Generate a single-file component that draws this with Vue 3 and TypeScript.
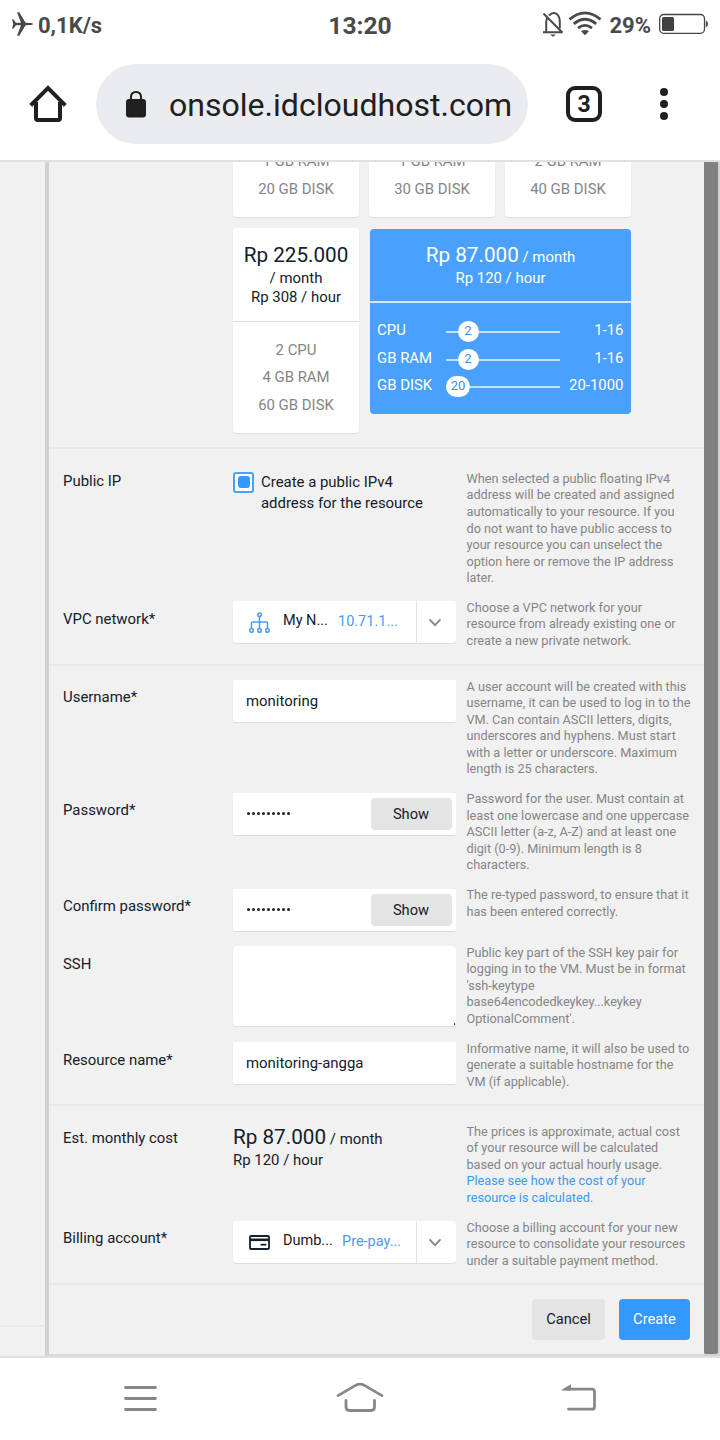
<script setup lang="ts">
interface Plan {
  ram: string
  disk: string
}
interface Slider {
  name: string
  value: number
  range: string
  offset: number
  wide?: boolean
}

const plans: Plan[] = [
  { ram: '1 GB RAM', disk: '20 GB DISK' },
  { ram: '1 GB RAM', disk: '30 GB DISK' },
  { ram: '2 GB RAM', disk: '40 GB DISK' },
]

const sliders: Slider[] = [
  { name: 'CPU', value: 2, range: '1-16', offset: 11.5 },
  { name: 'GB RAM', value: 2, range: '1-16', offset: 11.5 },
  { name: 'GB DISK', value: 20, range: '20-1000', offset: 0, wide: true },
]

const help = {
  ip: `When selected a public floating IPv4
address will be created and assigned
automatically to your resource. If you
do not want to have public access to
your resource you can unselect the
option here or remove the IP address
later.`,
  vpc: `Choose a VPC network for your
resource from already existing one or
create a new private network.`,
  user: `A user account will be created with this
username, it can be used to log in to the
VM. Can contain ASCII letters, digits,
underscores and hyphens. Must start
with a letter or underscore. Maximum
length is 25 characters.`,
  password: `Password for the user. Must contain at
least one lowercase and one uppercase
ASCII letter (a-z, A-Z) and at least one
digit (0-9). Minimum length is 8
characters.`,
  confirm: `The re-typed password, to ensure that it
has been entered correctly.`,
  ssh: `Public key part of the SSH key pair for
logging in to the VM. Must be in format
'ssh-keytype
base64encodedkeykey...keykey
OptionalComment'.`,
  name: `Informative name, it will also be used to
generate a suitable hostname for the
VM (if applicable).`,
  cost: `The prices is approximate, actual cost
of your resource will be calculated
based on your actual hourly usage.`,
  costLink: `Please see how the cost of your
resource is calculated.`,
  billing: `Choose a billing account for your new
resource to consolidate your resources
under a suitable payment method.`,
}
</script>

<template>
  <div class="phone">
    <header class="status">
      <div class="status-left">
        <svg class="plane" width="22" height="24" viewBox="0 0 22 24">
          <path d="M1 7.2 2.6 7.4 5 10.8 10 10.8 6 .2 8.2 .2 14.6 10.8 19.6 10.9Q22 11 22 12 22 13 19.6 13.1L14.6 13.2 8.2 23.8 6 23.8 10 13.2 5 13.2 2.6 16.6 1 16.8 2.2 12Z" fill="#4a4a4a" />
        </svg>
        <span>0,1K/s</span>
      </div>
      <span class="clock">13:20</span>
      <div class="status-right">
        <svg width="22" height="26" viewBox="0 0 22 26" fill="none" stroke="#4a4a4a" stroke-width="2">
          <path d="M1 21.2H20M4.2 21V11Q4.2 8.5 5.5 7M7 4.5Q11 .2 15 3.2Q17.8 5.5 17.8 11V17.5" />
          <path d="M1.5 2.5 20.5 21.8" />
          <path d="M8 23.4H14L11 25.8Z" fill="#4a4a4a" stroke="none" />
        </svg>
        <svg class="wifi" width="34" height="25" viewBox="0 0 34 25" fill="none" stroke="#4a4a4a" stroke-width="2.8">
          <path d="M1.5 8.4Q17-4.6 32.5 8.4" />
          <path d="M5.8 12.9Q17 3.7 28.2 12.9" />
          <path d="M10 17.2Q17 11.6 24 17.2" />
          <path d="M13 20.3Q17 17.5 21 20.3L17 24.2Z" fill="#4a4a4a" stroke="none" />
        </svg>
        <span class="percent">29%</span>
        <svg class="battery" width="50" height="22" viewBox="0 0 50 22">
          <rect x=".7" y="1.5" width="44.8" height="18.8" rx="4" fill="none" stroke="#464646" stroke-width="1.3" />
          <rect x="3" y="4" width="12" height="14" rx="1.5" fill="#41423d" />
          <path d="M46.8 7.5Q49 8 49 11 49 14 46.8 14.5Z" fill="#464646" />
        </svg>
      </div>
    </header>

    <nav class="toolbar">
      <svg class="home" width="38" height="38" viewBox="0 0 38 38" fill="none" stroke="#202020" stroke-width="4" stroke-linejoin="round">
        <path d="M7 17V33.2Q7 35 9 35H29Q31 35 31 33.2V17" />
        <path d="M1.7 20.3 19 3 36.3 20.3" stroke-linejoin="miter" />
      </svg>
      <div class="address">
        <svg width="20" height="27" viewBox="0 0 20 27">
          <rect y="8" width="20" height="18.5" rx="3" fill="#202020" />
          <path d="M5 10V6Q5 1 10 1T15 6V10" fill="none" stroke="#202020" stroke-width="2" />
        </svg>
        <span>onsole.idcloudhost.com</span>
      </div>
      <div class="tabs">3</div>
      <div class="dots"><i></i><i></i><i></i></div>
    </nav>

    <main class="viewport">
      <aside class="backdrop"></aside>
      <div class="panel">
        <section class="plans">
          <div class="plan-row">
            <div v-for="p in plans" :key="p.disk" class="card small">
              <span>{{ p.ram }}</span><span>{{ p.disk }}</span>
            </div>
          </div>
          <div class="plan-row second">
            <div class="card large">
              <div class="price">
                <b>Rp 225.000</b>
                <span>/ month</span>
                <span>Rp 308 / hour</span>
              </div>
              <div class="specs"><span>2 CPU</span><span>4 GB RAM</span><span>60 GB DISK</span></div>
            </div>
            <div class="custom">
              <div class="custom-price">
                <div><b>Rp 87.000</b> / month</div>
                <div>Rp 120 / hour</div>
              </div>
              <div class="sliders">
                <div v-for="s in sliders" :key="s.name" class="slider">
                  <span class="slider-name">{{ s.name }}</span>
                  <span class="track">
                    <span class="knob" :class="{ wide: s.wide }" :style="{ marginLeft: s.offset + 'px' }">{{ s.value }}</span>
                  </span>
                  <span class="range">{{ s.range }}</span>
                </div>
              </div>
            </div>
          </div>
        </section>

        <section class="group network">
          <div class="row">
            <label>Public IP</label>
            <div class="check">
              <span class="box"><i></i></span>
              <span>Create a public IPv4<br />address for the resource</span>
            </div>
            <p>{{ help.ip }}</p>
          </div>
          <div class="row">
            <label>VPC network*</label>
            <div class="select">
              <svg class="tree" width="21" height="21" viewBox="0 0 21 21" fill="none" stroke="#4a9cf0" stroke-width="1.5">
                <circle cx="10.5" cy="2.7" r="1.8" />
                <path d="M10.5 4.5V16.5M2.5 16.5V10.8Q2.5 10 3.3 10H17.7Q18.5 10 18.5 10.8V16.5" />
                <circle cx="2.5" cy="18.4" r="1.8" /><circle cx="10.5" cy="18.4" r="1.8" /><circle cx="18.5" cy="18.4" r="1.8" />
              </svg>
              <span class="main">My N...</span><span class="sub">10.71.1...</span>
              <span class="arrow"><svg width="14" height="9" viewBox="0 0 14 9" fill="none" stroke="#858585" stroke-width="1.8"><path d="M1.5 1.3 7 7.2 12.5 1.3" /></svg></span>
            </div>
            <p>{{ help.vpc }}</p>
          </div>
        </section>

        <section class="group access">
          <div class="row">
            <label>Username*</label>
            <div class="input">monitoring</div>
            <p>{{ help.user }}</p>
          </div>
          <div class="row">
            <label>Password*</label>
            <div class="input"><span class="secret"><i v-for="n in 9" :key="n"></i></span><button>Show</button></div>
            <p>{{ help.password }}</p>
          </div>
          <div class="row">
            <label>Confirm password*</label>
            <div class="input"><span class="secret"><i v-for="n in 9" :key="n"></i></span><button>Show</button></div>
            <p>{{ help.confirm }}</p>
          </div>
          <div class="row">
            <label>SSH</label>
            <div class="input area"><i class="grip"></i></div>
            <p>{{ help.ssh }}</p>
          </div>
          <div class="row">
            <label>Resource name*</label>
            <div class="input">monitoring-angga</div>
            <p>{{ help.name }}</p>
          </div>
        </section>

        <section class="group cost">
          <div class="row">
            <label>Est. monthly cost</label>
            <div class="total">
              <div><b>Rp 87.000</b> / month</div>
              <div>Rp 120 / hour</div>
            </div>
            <p>{{ help.cost }}<a>{{ help.costLink }}</a></p>
          </div>
          <div class="row">
            <label>Billing account*</label>
            <div class="select">
              <svg class="credit" width="21" height="15" viewBox="0 0 21 15">
                <rect x="1" y="1" width="19" height="13" rx="1" fill="none" stroke="#14202b" stroke-width="1.8" />
                <path d="M1 4.8H20" stroke="#14202b" stroke-width="2.6" /><path d="M11.5 9.7H17.3" stroke="#14202b" stroke-width="1.8" />
              </svg>
              <span class="main">Dumb...</span><span class="sub">Pre-pay...</span>
              <span class="arrow"><svg width="14" height="9" viewBox="0 0 14 9" fill="none" stroke="#858585" stroke-width="1.8"><path d="M1.5 1.3 7 7.2 12.5 1.3" /></svg></span>
            </div>
            <p>{{ help.billing }}</p>
          </div>
        </section>

        <footer class="actions">
          <button class="cancel">Cancel</button>
          <button class="create">Create</button>
        </footer>
      </div>
      <div class="scrollbar"><i></i></div>
    </main>

    <nav class="system">
      <svg width="34" height="28" viewBox="0 0 34 28" stroke="#888" stroke-width="2.8" stroke-linecap="round"><path d="M1.5 2.5H31.5M1.5 13.5H31.5M1.5 24.5H31.5" /></svg>
      <svg width="48" height="32" viewBox="0 0 48 32" fill="none" stroke="#888" stroke-width="2.8" stroke-linecap="round">
        <path d="M2 14.6 19.5 4.4Q24 2 28.5 4.4L46 14.6M10 19.5V26Q10 29.5 13.5 29.5H35Q38.5 29.5 38.5 26V19.5" />
      </svg>
      <svg width="36" height="30" viewBox="0 0 36 30" fill="none" stroke="#888" stroke-width="2.8" stroke-linecap="round">
        <path d="M5 6.2H31Q33.5 6.2 33.5 8.7V23.7Q33.5 26.2 31 26.2H7.5" />
        <path d="M1 6.5 10 1.2V7.6H1Z" fill="#888" stroke="none" />
      </svg>
    </nav>
  </div>
</template>

<style>
body { background: #fff; }
</style>

<style scoped>
* { box-sizing: border-box; }
.phone {
  width: 720px; height: 1440px; overflow: hidden; background: #fff;
  font-family: Roboto, "Noto Sans", sans-serif; font-size: 14.93px; line-height: 20px; color: #14202b;
  display: flex; flex-direction: column;
}
svg { display: block; flex: none; }
b { font-weight: 400; }
p { margin: 0; }
button { border: 0; font: inherit; font-size: 14.7px; color: inherit; padding: 0; }

.status {
  height: 50px; flex: none; padding: 1px 11px 0 11px; display: grid; grid-template-columns: 1fr auto 1fr;
  align-items: center; color: #4a4a4a; font-weight: 700; font-size: 22px;
}
.status-left, .status-right { display: flex; align-items: center; }
.status-left { gap: 5px; }
.status-left span, .percent { padding-top: 1px; }
.plane { margin-top: -3px; }
.clock { font-size: 24.6px; padding-top: 1px; }
.status-right { justify-content: flex-end; }
.status-right svg { margin-top: -3px; }
.status-right .battery { margin-top: -3px; }
.status-right .wifi { margin: -4px 7px 0 4px; }
.percent { margin-right: 8px; }

.toolbar { height: 110px; flex: none; display: flex; align-items: center; padding: 0 0 2px 29px; }
.address {
  width: 432px; height: 80px; border-radius: 40px; background: #ebecf0; margin-left: 29px; padding-left: 30px; flex: none;
  display: flex; align-items: center; gap: 23px; font-size: 32.05px; color: #202020; white-space: nowrap;
}
.address span { padding-top: 1px; }
.tabs {
  width: 36px; height: 36px; border: 4px solid #202020; border-radius: 9px; margin-left: 38px;
  font-weight: 700; font-size: 23px; line-height: 29px; text-align: center; color: #202020;
}
.dots { display: flex; flex-direction: column; gap: 4px; margin-left: 58px; }
.dots i { width: 8px; height: 8px; border-radius: 50%; background: #202020; }

.viewport {
  height: 1198px; flex: none; display: flex; background: #f1f1f1;
  border-top: 2px solid #e0e0e0; border-bottom: 2px solid #e0e0e0;
}
.backdrop { width: 45px; flex: none; border-bottom: 2px solid #e9e9e9; height: 1165px; }
.panel { width: 659px; flex: none; border-left: 4px solid #d2d2d2; border-bottom: 2px solid #dadada; overflow: hidden; }
.scrollbar { flex: 1; background: #d3d3d3; }
.scrollbar i { display: block; width: 14px; height: 1192px; background: #808080; border-radius: 0 0 2px 2px; }

.plans { height: 287px; padding-left: 184px; border-bottom: 2px solid #e8e8e8; overflow: hidden; }
.plan-row { display: flex; gap: 10px; }
.second { margin-top: 11px; gap: 11px; align-items: flex-start; }
.card { width: 126px; background: #fff; border-radius: 4px; box-shadow: 0 1px 1px #dedede; display: flex; flex-direction: column; text-align: center; color: #858585; }
.card span { display: block; }
.small { height: 55px; border-radius: 0 0 4px 4px; justify-content: flex-end; padding-bottom: 13.5px; line-height: 27.6px; }
.large { height: 205px; }
.price { height: 94px; border-bottom: 1px solid #dedede; padding-top: 14px; color: #14202b; line-height: 19px; white-space: nowrap; }
.price b { display: block; font-size: 20.7px; line-height: 26px; margin-bottom: 1px; }
.specs { padding-top: 14.5px; line-height: 27.6px; }
.custom { width: 261px; height: 185px; margin-top: 1px; background: #4aa1fd; border-radius: 4px; color: #fff; }
.custom-price { height: 74px; border-bottom: 2px solid #d4e9ff; padding-top: 14.5px; text-align: center; line-height: 22px; }
.custom-price div + div { margin-top: -1px; }
.custom b, .total b { font-size: 20.7px; }
.sliders { padding: 13.3px 7.5px 0 7px; }
.slider { display: flex; align-items: center; height: 27.6px; }
.slider-name { width: 69px; }
.track { width: 114px; height: 21px; margin-top: 3px; display: flex; align-items: center; background: linear-gradient(#c6e1ff, #c6e1ff) 0 10px / 100% 2px no-repeat; }
.knob { width: 21px; height: 21px; border-radius: 50%; background: #fff; color: #3f91e6; font-size: 13px; line-height: 19px; text-align: center; }
.knob.wide { width: 24px; border-radius: 11px; }
.range { flex: 1; text-align: right; }

.group { border-bottom: 2px solid #e8e8e8; display: grid; padding-left: 14px; }
.network { height: 216.5px; padding-top: 21px; grid-template-rows: 129.5px 1fr; }
.access { height: 440.5px; padding-top: 13px; grid-template-rows: 112.5px 96px 57.5px 96px 1fr; }
.cost { height: 179px; padding-top: 17.5px; grid-template-rows: 96px 1fr; }
.row { display: grid; grid-template-columns: 170px 223px 224.5px; align-items: start; }
.row label { padding-top: 9px; }
.access .row:first-child label, .cost .row label { padding-top: 8.5px; }
.network .row:first-child label { padding-top: 1px; }
.cost .row:first-child label { padding-top: 4px; }
.row p { margin-left: 10.5px; font-size: 12.68px; line-height: 16.6px; color: #858585; white-space: pre; }
.network .row:first-child p { padding-top: .9px; }
.row a { display: block; color: #3d97f5; }
.check { display: flex; gap: 7px; line-height: 21px; padding-top: 1.5px; }
.box { width: 21px; height: 21px; border: 2px solid #4aa1fd; border-radius: 3px; background: #fff; display: grid; place-items: center; }
.box i { width: 12px; height: 12px; border-radius: 3px; background: #3399ff; }
.select, .input { height: 42px; margin-top: 1.5px; background: #fff; border-radius: 3px; box-shadow: 0 1px 1px #dcdcdc; display: flex; align-items: center; }
.select { padding-left: 16px; white-space: nowrap; font-size: 14.5px; }
.main { margin-left: 13px; width: 55px; margin-top: -2px; }
.credit + .main { width: 59px; }
.cost .sub { margin-top: -1px; }
.sub { color: #4a9cf0; }
.arrow { margin-left: auto; width: 40px; height: 42px; border-left: 1px solid #e2e2e2; padding-right: 3px; display: grid; place-items: center; }
.input { padding: 0 4.5px 0 13px; border-radius: 2px; }
.input button { margin-left: auto; width: 81px; height: 32px; background: #e4e4e4; border-radius: 4px; }
.secret { display: flex; gap: 2px; margin-left: 1px; }
.secret i { width: 3px; height: 3px; border-radius: 50%; background: #14202b; }
.area { height: 79.5px; border-radius: 4px; padding-right: 1px; align-items: flex-end; justify-content: flex-end; }
.grip { width: 1px; height: 2px; background: #444; margin-bottom: 1px; }
.total { padding-top: 2px; line-height: 22.5px; }
.total div + div { margin-top: -1px; }

.actions { display: flex; justify-content: flex-end; gap: 14px; padding: 14px 14px 0 0; }
.actions button { height: 41px; border-radius: 4px; padding-bottom: 2px; }
.cancel { width: 73px; background: #e4e4e4; }
.actions .create { width: 71px; background: #3399ff; color: #fff; }

.system { flex: 1; display: flex; align-items: flex-start; padding: 27px 0 0 124px; }
.system svg + svg { margin: -4px 0 0 178px; }
.system svg:last-child { margin: -2px 0 0 177px; }
</style>
